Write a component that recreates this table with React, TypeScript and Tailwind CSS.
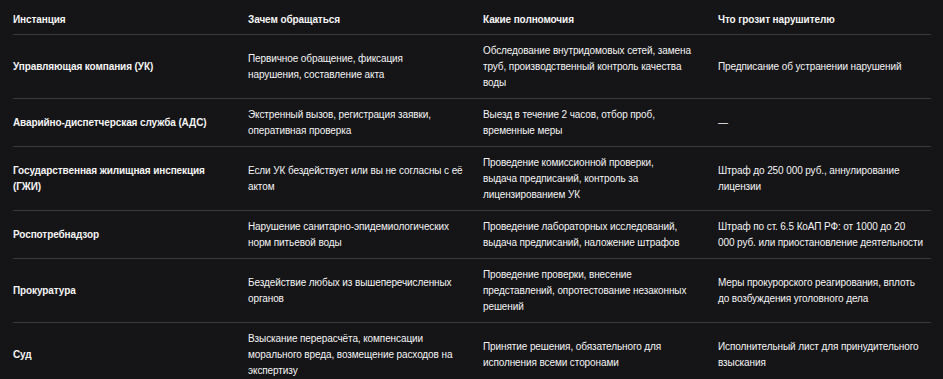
import React from 'react';

// строки таблицы: переносы строк заданы явно, как на макете
const rows: string[][][] = [
  [
    ['Управляющая компания (УК)'],
    ['Первичное обращение, фиксация', 'нарушения, составление акта'],
    ['Обследование внутридомовых сетей, замена', 'труб, производственный контроль качества', 'воды'],
    ['Предписание об устранении нарушений'],
  ],
  [
    ['Аварийно-диспетчерская служба (АДС)'],
    ['Экстренный вызов, регистрация заявки,', 'оперативная проверка'],
    ['Выезд в течение 2 часов, отбор проб,', 'временные меры'],
    ['—'],
  ],
  [
    ['Государственная жилищная инспекция', '(ГЖИ)'],
    ['Если УК бездействует или вы не согласны с её', 'актом'],
    ['Проведение комиссионной проверки,', 'выдача предписаний, контроль за', 'лицензированием УК'],
    ['Штраф до 250 000 руб., аннулирование', 'лицензии'],
  ],
  [
    ['Роспотребнадзор'],
    ['Нарушение санитарно-эпидемиологических', 'норм питьевой воды'],
    ['Проведение лабораторных исследований,', 'выдача предписаний, наложение штрафов'],
    ['Штраф по ст. 6.5 КоАП РФ: от 1000 до 20', '000 руб. или приостановление деятельности'],
  ],
  [
    ['Прокуратура'],
    ['Бездействие любых из вышеперечисленных', 'органов'],
    ['Проведение проверки, внесение', 'представлений, опротестование незаконных', 'решений'],
    ['Меры прокурорского реагирования, вплоть', 'до возбуждения уголовного дела'],
  ],
  [
    ['Суд'],
    ['Взыскание перерасчёта, компенсации', 'морального вреда, возмещение расходов на', 'экспертизу'],
    ['Принятие решения, обязательного для', 'исполнения всеми сторонами'],
    ['Исполнительный лист для принудительного', 'взыскания'],
  ],
];

const headers = ['Инстанция', 'Зачем обращаться', 'Какие полномочия', 'Что грозит нарушителю'];

function Lines({ lines }: { lines: string[] }) {
  return (
    <>
      {lines.map((l, i) => (
        <div key={i} className="whitespace-nowrap">{l}</div>
      ))}
    </>
  );
}

export default function App() {
  return (
    <div
      className="w-[943px] h-[379px] overflow-hidden bg-[#151518] text-[#f4f4f4] px-[13px] text-[10px] leading-[16px] tracking-[-0.1px]"
      style={{ fontFamily: '"Liberation Sans", Arial, sans-serif' }}
    >
      <table className="table-fixed border-collapse w-[918px]">
        <colgroup>
          <col className="w-[235px]" />
          <col className="w-[235px]" />
          <col className="w-[235px]" />
          <col className="w-[213px]" />
        </colgroup>
        <thead>
          <tr className="border-b border-[#3a3a3c]">
            {headers.map((h) => (
              <th key={h} className="text-left font-bold pt-3 pb-1.5 pr-6 align-middle whitespace-nowrap">
                {h}
              </th>
            ))}
          </tr>
        </thead>
        <tbody>
          {rows.map((row, r) => (
            <tr key={r} className="border-b border-[#3a3a3c]">
              {row.map((cell, c) => (
                <td
                  key={c}
                  className={`align-middle pt-2 pb-[7px] pr-6 ${c === 0 ? 'font-bold' : 'font-normal'}`}
                >
                  <Lines lines={cell} />
                </td>
              ))}
            </tr>
          ))}
        </tbody>
      </table>
    </div>
  );
}
